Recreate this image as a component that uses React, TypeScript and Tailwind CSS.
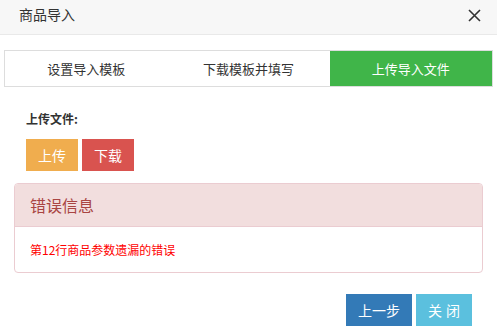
export default function App() {
  const font = { fontFamily: '"Noto Sans CJK SC", "Liberation Sans", sans-serif' };
  return (
    <div className="w-[497px] h-[335px] bg-white overflow-hidden" style={font}>
      {/* 标题栏 */}
      <div className="h-[35px] bg-[#f7f7f7] border-b border-[#e9e9e9] flex items-center justify-between pl-[19px] pr-[16px]">
        <span className="text-[14px] text-[#333] leading-none -mt-[6px]">商品导入</span>
        <svg width="13" height="13" viewBox="0 0 13 13" className="-mt-[3px]">
          <path d="M1 1 L12 12 M12 1 L1 12" stroke="#333" strokeWidth="1.6" />
        </svg>
      </div>

      <div className="px-[4px] pt-[15px]">
        {/* 步骤 */}
        <div className="grid grid-cols-3 h-[37px] border border-[#ddd] text-[13px]">
          <div className="flex items-center justify-center text-[#333]">设置导入模板</div>
          <div className="flex items-center justify-center text-[#333]">下载模板并填写</div>
          <div className="flex items-center justify-center bg-[#40b549] text-white">上传导入文件</div>
        </div>
      </div>

      <div className="pl-[26px] pt-[24px]">
        <div className="text-[12px] font-bold text-[#333] leading-[16px]">上传文件:</div>
        <div className="flex gap-[4px] mt-[12px]">
          <button className="w-[52px] h-[32px] bg-[#f0ad4e] text-white text-[14px]">上传</button>
          <button className="w-[52px] h-[32px] bg-[#d9534f] text-white text-[14px]">下载</button>
        </div>
      </div>

      {/* 错误信息 */}
      <div className="mx-[14px] mt-[12px] w-[469px] border border-[#ebccd1] rounded-[4px] overflow-hidden">
        <div className="h-[43px] bg-[#f2dede] border-b border-[#ebccd1] flex items-center pl-[15px] text-[16px] text-[#a94442]">
          错误信息
        </div>
        <div className="h-[45px] flex items-center pl-[15px] text-[12px] text-[#ff0000]">
          第12行商品参数遗漏的错误
        </div>
      </div>

      {/* 底部按钮 */}
      <div className="flex justify-end gap-[4px] pr-[25px] mt-[21px]">
        <button className="w-[66px] h-[32px] bg-[#337ab7] text-white text-[14px]">上一步</button>
        <button className="w-[56px] h-[32px] bg-[#5bc0de] text-white text-[14px] tracking-[4px] pl-[4px]">关闭</button>
      </div>
    </div>
  );
}
